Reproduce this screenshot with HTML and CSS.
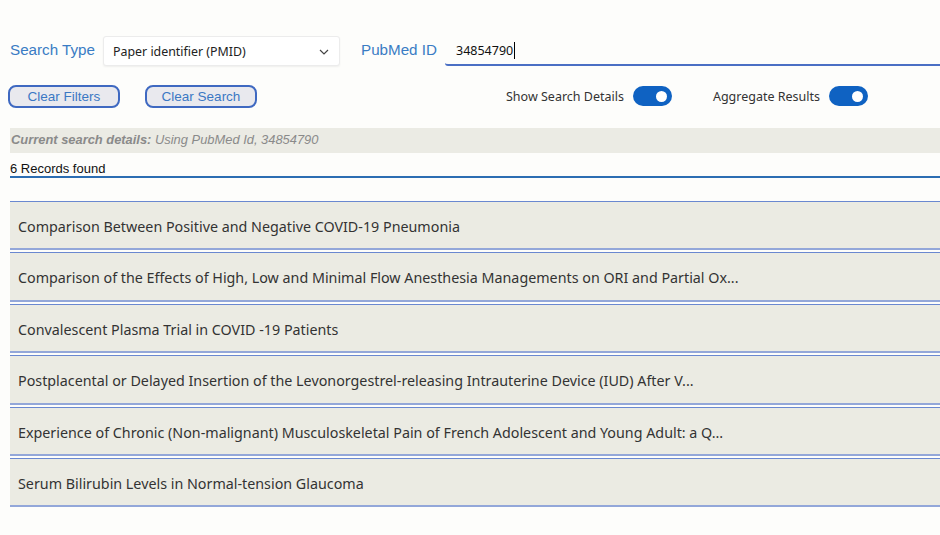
FILE: index.html
```html
<!DOCTYPE html>
<html>
<head>
<meta charset="utf-8">
<link rel="stylesheet" href="styles.css">
</head>
<body>
<div class="page">
  <div class="search-row">
    <label class="field-label">Search Type</label>
    <div class="select">
      <span>Paper identifier (PMID)</span>
      <svg class="chev" width="10" height="6" viewBox="0 0 10 6"><path d="M1 1l4 4 4-4" fill="none" stroke="#444" stroke-width="1.2"/></svg>
    </div>
    <label class="field-label pm-label">PubMed ID</label>
    <div class="text-input"><span>34854790</span><span class="caret"></span></div>
  </div>
  <div class="control-row">
    <button class="btn">Clear Filters</button>
    <button class="btn btn-second">Clear Search</button>
    <div class="toggles">
      <div class="toggle-group"><span>Show Search Details</span><span class="toggle"><span class="knob"></span></span></div>
      <div class="toggle-group"><span>Aggregate Results</span><span class="toggle"><span class="knob"></span></span></div>
    </div>
  </div>
  <div class="details"><b>Current search details:</b> Using PubMed Id, 34854790</div>
  <div class="count">6 Records found</div>
  <ul class="results">
    <li>Comparison Between Positive and Negative COVID-19 Pneumonia</li>
    <li>Comparison of the Effects of High, Low and Minimal Flow Anesthesia Managements on ORI and Partial Ox...</li>
    <li>Convalescent Plasma Trial in COVID -19 Patients</li>
    <li>Postplacental or Delayed Insertion of the Levonorgestrel-releasing Intrauterine Device (IUD) After V...</li>
    <li>Experience of Chronic (Non-malignant) Musculoskeletal Pain of French Adolescent and Young Adult: a Q...</li>
    <li>Serum Bilirubin Levels in Normal-tension Glaucoma</li>
  </ul>
</div>
</body>
</html>
```

FILE: styles.css
```css
html, body {
  margin: 0;
  padding: 0;
  background: #fdfdfb;
}
.page {
  width: 940px;
  height: 535px;
  overflow: hidden;
  padding: 36px 0 0 10px;
  box-sizing: border-box;
  font-family: "Liberation Sans", Arial, sans-serif;
}
.search-row {
  display: flex;
  align-items: center;
  height: 30px;
}
.field-label {
  color: #3a7cc4;
  font-size: 15.2px;
  width: 93px;
  line-height: 30px;
  margin-top: -2px;
}
.select {
  width: 237px;
  height: 30px;
  box-sizing: border-box;
  background: #fff;
  border: 1px solid #ececec;
  border-radius: 3px;
  box-shadow: 0 1px 2px rgba(0,0,0,0.06);
  display: flex;
  align-items: center;
  justify-content: space-between;
  padding: 0 10px 0 9px;
  font-family: "Noto Sans", sans-serif;
  font-size: 12.4px;
  color: #222;
}
.chev { margin-top: 1px; }
.pm-label {
  margin-left: 21px;
  width: 84px;
}
.text-input {
  flex: 1;
  height: 30px;
  box-sizing: border-box;
  border-bottom: 2px solid #4a6fc4;
  border-radius: 0 0 0 3px;
  display: flex;
  align-items: center;
  padding-left: 11px;
  font-family: "Noto Sans", sans-serif;
  font-size: 12.5px;
  color: #111;
}
.caret {
  display: inline-block;
  width: 1px;
  height: 17px;
  background: #000;
  margin-left: 1px;
}
.control-row {
  display: flex;
  align-items: center;
  margin: 19px 0 0 -2px;
  height: 22px;
}
.btn {
  height: 23px;
  width: 112px;
  box-sizing: border-box;
  border: 2.5px solid #3f69c1;
  border-radius: 8px;
  background: #e9e9ee;
  color: #3b78c4;
  font-family: "Liberation Sans", Arial, sans-serif;
  font-size: 13.5px;
  padding: 0;
  line-height: 17px;
}
.btn-second { margin-left: 25px; }
.toggles {
  display: flex;
  align-items: center;
  margin-left: 249px;
  gap: 41px;
}
.toggle-group {
  display: flex;
  align-items: center;
  gap: 9px;
  font-family: "Noto Sans", sans-serif;
  font-size: 12.5px;
  color: #333;
}
.toggle {
  width: 39px;
  height: 20px;
  border-radius: 10px;
  background: #0f62c2;
  display: flex;
  align-items: center;
  justify-content: flex-end;
  padding-right: 5px;
  box-sizing: border-box;
}
.knob {
  width: 11px;
  height: 11px;
  border-radius: 50%;
  background: #fff;
}
.details {
  margin-top: 21px;
  height: 25px;
  line-height: 24px;
  background: #ebebe4;
  color: #8a8a8a;
  font-style: italic;
  font-size: 12.9px;
  padding-left: 1px;
}
.count {
  height: 23px;
  line-height: 32px;
  font-size: 13px;
  color: #111;
  border-bottom: 2px solid #2c6db2;
  box-sizing: content-box;
}
.results {
  list-style: none;
  margin: 23px 0 0 0;
  padding: 0;
}
.results li {
  height: 46.4px;
  line-height: 49px;
  background: #ebebe3;
  border-top: 1px solid #6a88d0;
  border-bottom: 2px solid #93a7d9;
  margin-bottom: 2px;
  padding-left: 8px;
  font-family: "Noto Sans", sans-serif;
  font-size: 14.3px;
  color: #333;
  white-space: nowrap;
  overflow: hidden;
  box-sizing: content-box;
}
```
